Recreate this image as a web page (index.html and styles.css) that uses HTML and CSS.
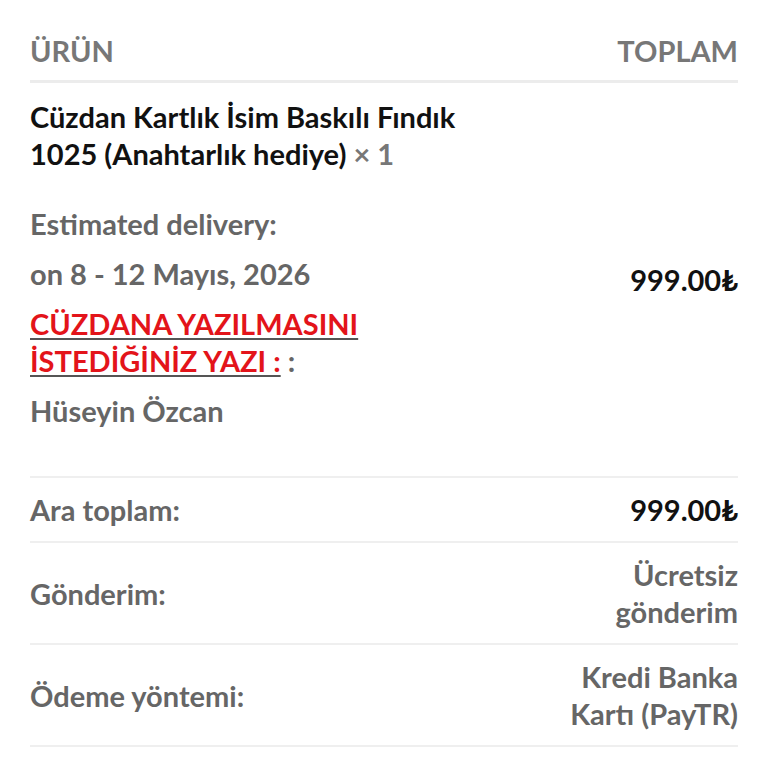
FILE: index.html
```html
<!DOCTYPE html>
<html lang="tr">
<head>
<meta charset="utf-8">
<title>Sipariş detayları</title>
<link rel="stylesheet" href="styles.css">
</head>
<body>
<table class="order">
  <colgroup><col class="col-name"><col class="col-total"></colgroup>
  <thead>
    <tr>
      <th class="head-name">ÜRÜN</th>
      <th class="head-total">TOPLAM</th>
    </tr>
  </thead>
  <tbody>
    <tr class="item">
      <td class="item-name">
        <div class="product">Cüzdan Kartlık İsim Baskılı Fındık 1025 (Anahtarlık hediye) <span class="qty">×&nbsp;1</span></div>
        <ul class="meta">
          <li>
            <div class="meta-label">Estimated delivery:</div>
            <p class="meta-value">on 8 - 12 Mayıs, 2026</p>
          </li>
          <li>
            <div class="meta-label"><span class="meta-link">CÜZDANA YAZILMASINI İSTEDİĞİNİZ YAZI :</span> :</div>
            <p class="meta-value">Hüseyin Özcan</p>
          </li>
        </ul>
      </td>
      <td class="item-total">999.00₺</td>
    </tr>
  </tbody>
  <tfoot>
    <tr>
      <th class="label">Ara toplam:</th>
      <td class="value strong">999.00₺</td>
    </tr>
    <tr>
      <th class="label">Gönderim:</th>
      <td class="value">Ücretsiz gönderim</td>
    </tr>
    <tr>
      <th class="label">Ödeme yöntemi:</th>
      <td class="value">Kredi Banka Kartı (PayTR)</td>
    </tr>
    <tr>
      <th class="label">Toplam:</th>
      <td class="value strong">999.00₺</td>
    </tr>
  </tfoot>
</table>
</body>
</html>
```
FILE: styles.css
```css
html, body {
  margin: 0;
  padding: 0;
  background: #ffffff;
}

body {
  padding: 0 30px;
  font-family: Lato, "Noto Sans", "DejaVu Sans", sans-serif;
  font-size: 29px;
  line-height: 37px;
  font-weight: 700;
  color: #111111;
  overflow: hidden;
}

.order {
  width: 100%;
  border-collapse: collapse;
  table-layout: fixed;
}

.col-total {
  width: 210px;
}

th, td {
  padding: 0;
  text-align: left;
  font-weight: 700;
}

.head-name,
.head-total {
  padding: 32px 0 11px;
  color: #777777;
  border-bottom: 3px solid #ececec;
}

.head-total {
  text-align: right;
}

.item-name {
  padding: 15px 0 47px;
  vertical-align: top;
}

.product {
  color: #111111;
}

.qty {
  color: #777777;
}

.meta {
  list-style: none;
  margin: 33px 0 0;
  padding: 0;
  color: #666666;
}

.meta li + li {
  margin-top: 13px;
}

.meta-value {
  margin: 13px 0 0;
}

.meta-link {
  color: #e3141a;
  text-decoration: underline;
  text-decoration-color: #555555;
  text-underline-offset: 3px;
  text-decoration-thickness: 2px;
}

.item-total {
  text-align: right;
  vertical-align: middle;
  color: #111111;
}

tfoot tr {
  border-top: 2px solid #efefef;
}

.label,
.value {
  padding: 13px 0;
  vertical-align: middle;
  color: #666666;
}

.value {
  text-align: right;
}

.value.strong {
  color: #111111;
}
```
